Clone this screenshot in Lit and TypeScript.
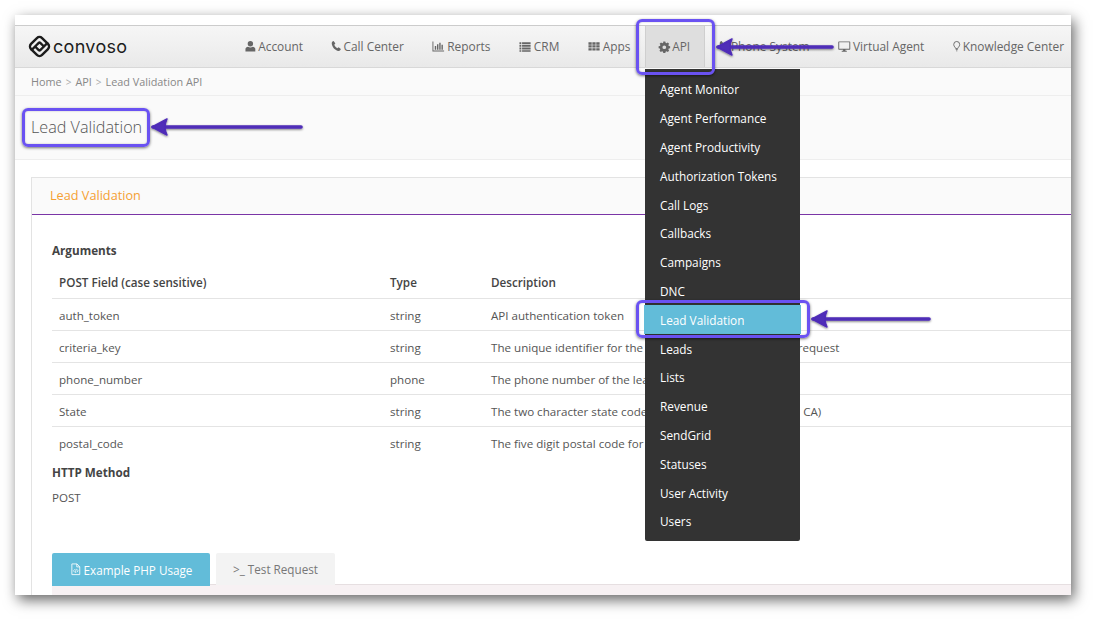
import { LitElement, html, css, svg } from "lit";
import { customElement } from "lit/decorators.js";

const ICONS: Record<string, unknown> = {
  user: svg`<path d="M5.800 1.200a2.900 2.900 0 1 1 0 5.800 2.900 2.900 0 0 1 0-5.800zM.5 12.500V9.800C.5 8.200 1.800 7.200 3.300 7.200c.7.500 1.600.8 2.500.8s1.800-.3 2.500-.8c1.500 0 2.800 1 2.800 2.600v2.700z"/>`,
  phone: svg`<path d="M2.800 1.200 4.700 3.800 3.500 5.200c.6 1.500 1.800 2.800 3.300 3.600L8.200 7.800l2.400 1.900c-.2 1.200-1.300 2.300-2.500 2.100C4.300 11.200 1.100 7.600.8 3.700.7 2.500 1.700 1.400 2.800 1.200z"/>`,
  chart: svg`<path d="M.5 1.500h1v9.800h11.500v1H.5z"/><path d="M3 6.500h1.500v4H3zM5.400 4.500h1.500v6H5.400zM7.800 3h1.500v7.500H7.800zM10.200 5h1.500v5.500h-1.500z"/>`,
  list: svg`<path d="M.5 2.300h2v2h-2zM3.300 2.300h9.200v2H3.300zM.5 5.200h2v2h-2zM3.300 5.200h9.200v2H3.300zM.5 8.100h2v2h-2zM3.300 8.100h9.200v2H3.300zM.5 11h2v1.700h-2zM3.300 11h9.200v1.700H3.300z"/>`,
  grid: svg`<path d="M.5 2.500h3.500v2.500H.5zM4.700 2.500h3.500v2.500H4.700zM8.900 2.500h3.600v2.500H8.900zM.5 5.700h3.500v2.500H.5zM4.700 5.700h3.500v2.500H4.700zM8.900 5.700h3.600v2.500H8.900zM.5 8.900h3.500v2.500H.5zM4.700 8.900h3.500v2.500H4.700zM8.900 8.900h3.600v2.500H8.900z"/>`,
  gear: svg`<path fill-rule="evenodd" d="M4.600 1.500h2.200l.3 1.500 1 .4 1.300-.8 1.500 1.500-.8 1.300.4 1 1.500.3v2.200l-1.500.3-.4 1 .8 1.300-1.500 1.500-1.300-.8-1 .4-.3 1.500H4.600l-.3-1.500-1-.4-1.300.8-1.500-1.500.8-1.300-.4-1L-.4 8.900V6.700l1.500-.3.4-1-.8-1.300L2.200 2.600l1.300.8 1-.4zM5.700 5.800a2 2 0 1 0 0 4 2 2 0 0 0 0-4z"/>`,
  phone2: svg`<path d="M2.800 1.200 4.700 3.800 3.500 5.200c.6 1.500 1.800 2.800 3.300 3.600L8.200 7.800l2.400 1.900c-.2 1.200-1.300 2.300-2.500 2.100C4.300 11.200 1.100 7.600.8 3.700.7 2.500 1.700 1.400 2.800 1.200z"/>`,
  monitor: svg`<path fill-rule="evenodd" d="M1 1.500h11.500c.4 0 .7.300.7.700v7.600c0 .4-.3.700-.7.700H8v1.200h1.500v1H4v-1h1.500V10.500H1c-.4 0-.7-.3-.7-.7V2.200c0-.4.300-.7.700-.7zm.3 1v6.900h10.900V2.500z"/>`,
  bulb: svg`<path fill="none" stroke="currentColor" stroke-width="1" d="M3 9.300C2.700 8 .8 7 .8 4.800a3.200 3.200 0 0 1 6.400 0C7.200 7 5.300 8 5 9.300z"/><path d="M2.900 10h2.200v.9H2.900zM3.300 11.300h1.400v.9H3.300z"/>`,
  code: svg`<path fill="none" stroke="currentColor" stroke-width=".9" d="M2 1h5.500L10.500 4v8.500H2zM7.300 1v3.200h3.200"/><path fill="none" stroke="currentColor" stroke-width=".8" d="M5 6.800 3.800 8.400 5 10M7.500 6.800l1.200 1.600L7.500 10M6.700 6.300 5.800 10.600"/>`,
};

const icon = (name: string, w = 13) =>
  html`<svg class="ic" width=${w} height="13" viewBox="0 0 ${(w * 14) / 13} 14" fill="currentColor">${ICONS[name]}</svg>`;

const NAV: [string, string, number][] = [
  ["user", "Account", 11],
  ["phone", "Call Center", 10],
  ["chart", "Reports", 13],
  ["list", "CRM", 13],
  ["grid", "Apps", 13],
  ["gear", "API", 11],
  ["phone2", "Phone System", 10],
  ["monitor", "Virtual Agent", 13],
  ["bulb", "Knowledge Center", 8],
];

const MENU = [
  "Agent Monitor", "Agent Performance", "Agent Productivity", "Authorization Tokens",
  "Call Logs", "Callbacks", "Campaigns", "DNC", "Lead Validation", "Leads", "Lists",
  "Revenue", "SendGrid", "Statuses", "User Activity", "Users",
];

const ROWS = [
  ["auth_token", "string", "API authentication token"],
  ["criteria_key", "string", "The unique identifier for the criteria set in this validation request"],
  ["phone_number", "phone", "The phone number of the lead to be validated"],
  ["State", "string", "The two character state code of the lead (for example: NJ, CA)"],
  ["postal_code", "string", "The five digit postal code for the lead"],
];

const arrow = (x1: number, x2: number, y: number) => svg`
  <g filter="url(#sh)" fill="none" stroke="#4f2db8" stroke-linecap="round" stroke-linejoin="round">
    <path d="M${x1 + 3} ${y}H${x2}" stroke-width="3.600"/>
    <path d="M${x1 + 17} ${y - 8}L${x1 + 2} ${y}L${x1 + 17} ${y + 8}Q${x1 + 13} ${y} ${x1 + 17} ${y - 8}z" fill="#4f2db8" stroke-width="1.500"/>
  </g>`;

@customElement("app-root")
export class AppRoot extends LitElement {
  static styles = css`
    :host {
      display: block;
      position: relative;
      width: 1096px;
      height: 620px;
      padding: 15px 25px 25px 15px;
      box-sizing: border-box;
      background: #fff;
      overflow: hidden;
      font-family: "Open Sans", sans-serif;
      font-size: 12px;
      color: #555;
    }
    .window {
      position: relative;
      height: 580px;
      background: #fff;
      overflow: hidden;
      box-shadow: 3px 5px 13px rgba(0, 0, 0, 0.6);
    }
    .top { height: 10px; background: #fff; border-bottom: 1px solid #ccc; }
    header {
      height: 41px;
      display: flex;
      align-items: center;
      background: linear-gradient(#f6f6f6, #e9e9e9);
      border-bottom: 1px solid #d8d8d8;
    }
    .logo { display: flex; align-items: center; gap: 1px; margin-left: 12px; width: 204px; flex: none; color: #1c1c1c; }
    .logo span { font-family: "Inter", sans-serif; font-weight: 400; font-size: 18px; letter-spacing: 0.300px; line-height: 1; }
    nav { display: flex; height: 100%; flex: none; }
    .nav {
      display: flex;
      align-items: center;
      gap: 2px;
      padding: 0 14.200px 1px;
      white-space: nowrap;
      color: #666;
      font-size: 11.900px;
    }
    .nav.active { background: #dedede; border-left: 1px solid #cfcfcf; border-right: 1px solid #cfcfcf; padding: 0 13px 1px; width: 60px; box-sizing: border-box; justify-content: center; }
    .ic { flex: none; display: block; overflow: visible; }
    .crumb {
      height: 27px;
      display: flex;
      align-items: center;
      gap: 4px;
      padding-left: 16px;
      background: #fafafa;
      border-bottom: 1px solid #eee;
      font-size: 10.850px;
      color: #888;
    }
    .crumb i { font-style: normal; color: #aaa; font-size: 10px; }
    .title {
      height: 64px;
      display: flex;
      align-items: center;
      padding-left: 16px;
      padding-bottom: 1px;
      box-sizing: border-box;
      background: #fafafa;
      border-bottom: 1px solid #eee;
      font-size: 16.200px;
      font-weight: 300;
      color: #555;
    }
    .panel {
      margin: 17px -20px 0 16px;
      border: 1px solid #e3e3e3;
      border-bottom: none;
      height: 420px;
    }
    .phead {
      height: 37px;
      display: flex;
      align-items: center;
      padding: 0 0 2px 18px;
      box-sizing: border-box;
      background: #fafafa;
      border-bottom: 1px solid #7a35a6;
      color: #f5a033;
      font-size: 12.700px;
    }
    .pbody { padding: 27px 0 0 20px; }
    h4 { margin: 0; font-size: 11.700px; font-weight: 700; color: #444; line-height: 16px; }
    table { width: 1040px; border-collapse: collapse; margin-top: 7px; font-size: 11.600px; color: #555; }
    th, td { text-align: left; white-space: nowrap; line-height: 16px; border-bottom: 1px solid #e4e4e4; }
    td { vertical-align: top; padding: 9px 0 0 7px; height: 22px; }
    tr:last-child td { border-bottom: none; }
    th { font-weight: 600; padding: 1px 0 0 7px; height: 32px; color: #444; font-size: 11.700px; }
    .c1 { width: 324px; }
    .c2 { width: 94px; }
    .post { margin-top: 10px; line-height: 16px; font-size: 11.600px; color: #555; }
    .method { margin-top: 6px; }
    .tabs { display: flex; gap: 6px; margin-top: 47px; align-items: flex-start; }
    .tab { height: 33px; display: flex; align-items: center; justify-content: center; gap: 1px; font-size: 11.700px; border-radius: 2px 2px 0 0; box-sizing: border-box; }
    .tab.on { width: 158px; background: #62bcd9; color: #fff; position: relative; z-index: 1; }
    .tab.off { width: 119px; background: #f3f3f3; color: #777; height: 32px; }
    .band { height: 11px; margin-top: -2px; background: #f7f1f3; border-top: 1px solid #e6dfe1; }
    .menu {
      position: absolute;
      left: 630px;
      top: 54px;
      width: 155px;
      height: 472px;
      padding-top: 6px;
      box-sizing: border-box;
      background: #333;
      border-radius: 0 0 2px 2px;
      color: #fff;
      font-size: 11.800px;
    }
    .menu div { height: 28.800px; display: flex; align-items: center; padding-left: 15px; font-weight: 500; }
    .menu div.sel { background: #62bcd9; margin: 0 -1px; padding-left: 16px; }
    .ring {
      position: absolute;
      border: 3px solid #6a52f2;
      border-radius: 6px;
      box-sizing: border-box;
      box-shadow: 0 1px 3px rgba(0, 0, 0, 0.55), inset 0 0 2px rgba(0, 0, 0, 0.25);
    }
    .r1 { left: 22px; top: 108px; width: 128px; height: 39px; }
    .r2 { left: 636px; top: 19px; width: 79px; height: 56px; }
    .r3 { left: 636px; top: 300px; width: 174px; height: 38px; }
    .over { position: absolute; left: 0; top: 0; pointer-events: none; }
  `;

  render() {
    return html`
      <div class="window">
        <div class="top"></div>
        <header>
          <div class="logo">
            <svg width="25" height="25" viewBox="0 0 24 24" fill="none" stroke="#1c1c1c" stroke-width="2.300" stroke-linejoin="round" stroke-linecap="round">
              <g transform="rotate(45 12 12)">
                <rect x="4.500" y="4.500" width="15" height="15" rx="3.500"/>
                <rect x="9" y="9" width="6" height="6" rx="1"/>
                <path d="M15 9V4.500M9 15v4.500"/>
              </g>
            </svg>
            <span>convoso</span>
          </div>
          <nav>
            ${NAV.map(
              ([ic, label, w]) => html`<div class="nav ${label === "API" ? "active" : ""}">${icon(ic, w)}<span>${label}</span></div>`
            )}
          </nav>
        </header>
        <div class="crumb"><span>Home</span><i>&gt;</i><span>API</span><i>&gt;</i><span>Lead Validation API</span></div>
        <div class="title">Lead Validation</div>
        <div class="panel">
          <div class="phead">Lead Validation</div>
          <div class="pbody">
            <h4>Arguments</h4>
            <table>
              <tr><th class="c1">POST Field (case sensitive)</th><th class="c2">Type</th><th>Description</th></tr>
              ${ROWS.map((r) => html`<tr><td>${r[0]}</td><td>${r[1]}</td><td>${r[2]}</td></tr>`)}
            </table>
            <h4 class="method">HTTP Method</h4>
            <div class="post">POST</div>
            <div class="tabs">
              <div class="tab on">${icon("code")}<span>Example PHP Usage</span></div>
              <div class="tab off"><span>&gt;_ Test Request</span></div>
            </div>
            <div class="band"></div>
          </div>
        </div>
        <div class="menu">
          ${MENU.map((m) => html`<div class=${m === "Lead Validation" ? "sel" : ""}>${m}</div>`)}
        </div>
      </div>
      <div class="ring r1"></div>
      <div class="ring r2"></div>
      <div class="ring r3"></div>
      <svg class="over" width="1096" height="620">
        <defs>
          <filter id="sh" x="-10%" y="-100%" width="120%" height="300%">
            <feDropShadow dx="0" dy="1" stdDeviation="1.200" flood-color="#000" flood-opacity=".5"/>
          </filter>
        </defs>
        ${arrow(150, 301, 127)}
        ${arrow(715, 832, 47)}
        ${arrow(810, 929, 319)}
      </svg>
    `;
  }
}
